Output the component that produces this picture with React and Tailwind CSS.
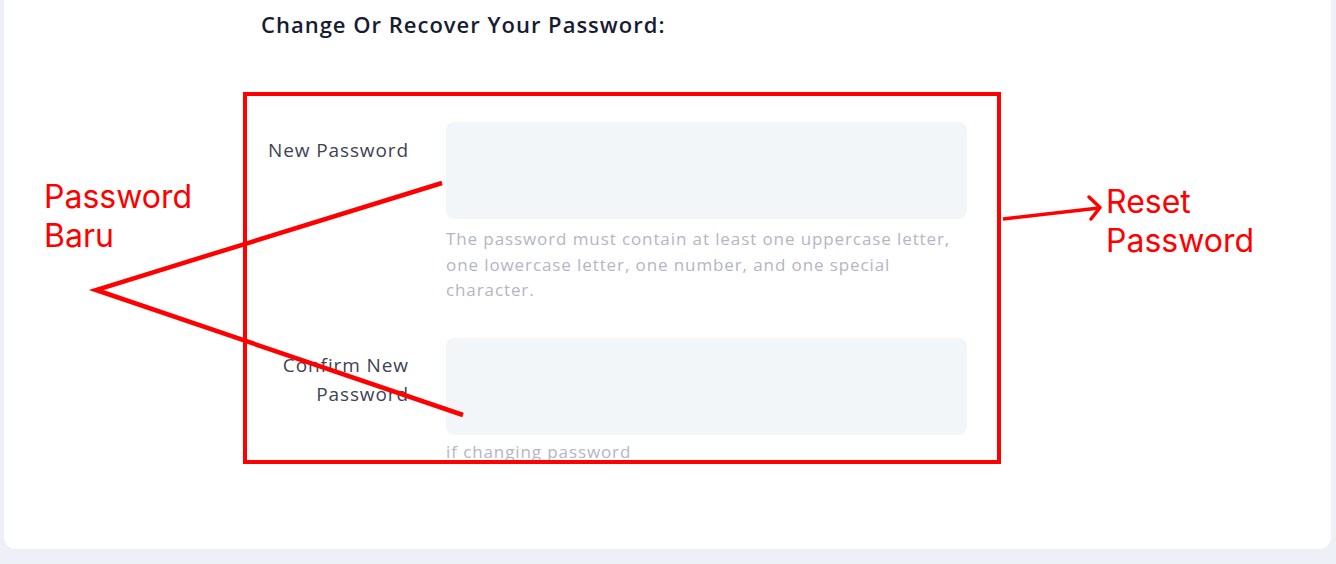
export default function App() {
  return (
    <div className="relative w-[1336px] h-[564px] overflow-hidden bg-[#eef0f8] font-['Open_Sans',sans-serif]">
      <div className="ml-[4px] mr-[5px] h-[549px] bg-white rounded-b-xl pl-[253px] pt-[9px]">
        <h3 className="text-[22px] font-semibold tracking-[1px] text-[#181c32] leading-[30px] pl-[4px]">
          Change Or Recover Your Password:
        </h3>

        <div className="mt-[83px] flex flex-col gap-[35px]">
          <div className="flex gap-[37px]">
            <label className="w-[152px] shrink-0 text-right text-[19px] tracking-[0.9px] leading-[29px] pt-[14px] text-[#3f4254]">
              New Password
            </label>
            <div className="w-[521px]">
              <div className="h-[97px] rounded-lg bg-[#f3f6f9]" />
              <p className="mt-[7px] text-[17px] tracking-[0.9px] leading-[25.5px] text-[#b5b5c3]">
                The password must contain at least one uppercase letter, one lowercase letter, one number, and one special character.
              </p>
            </div>
          </div>

          <div className="flex gap-[37px]">
            <label className="w-[152px] shrink-0 text-right text-[19px] tracking-[0.9px] leading-[29px] pt-[13px] text-[#3f4254]">
              Confirm New Password
            </label>
            <div className="w-[521px]">
              <div className="h-[97px] rounded-lg bg-[#f3f6f9]" />
              <p className="mt-[4px] text-[17px] tracking-[0.9px] leading-[25.5px] text-[#b5b5c3]">
                if changing password
              </p>
            </div>
          </div>
        </div>
      </div>

      <svg className="absolute inset-0 pointer-events-none" width="1336" height="564" viewBox="0 0 1336 564">
        <rect x="245" y="94" width="754" height="368" fill="none" stroke="#ff0000" strokeWidth="4" />
        <polyline points="442,183 96,290 463,415" fill="none" stroke="#ff0000" strokeWidth="4.5" />
        <line x1="1003" y1="219" x2="1099" y2="208" stroke="#ff0000" strokeWidth="3.5" />
        <polyline points="1089,197 1100,207.5 1091,219" fill="none" stroke="#ff0000" strokeWidth="3.5" strokeLinecap="round" strokeLinejoin="round" />
      </svg>

      <div className="absolute left-[44px] top-[177px] text-[32px] leading-[39px] text-[#ff0000] font-['Inter',sans-serif]">
        Password
        <br />
        Baru
      </div>
      <div className="absolute left-[1106px] top-[182px] text-[32px] leading-[39px] text-[#ff0000] font-['Inter',sans-serif]">
        Reset
        <br />
        Password
      </div>
    </div>
  );
}
